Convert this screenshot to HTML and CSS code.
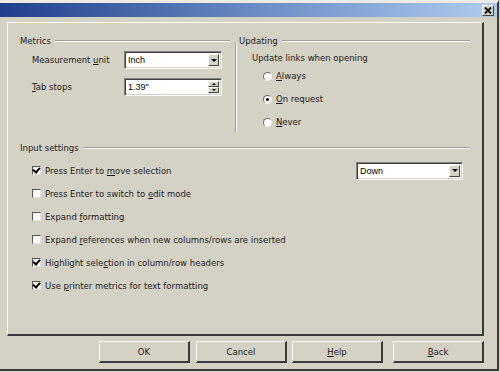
FILE: index.html
```html
<!DOCTYPE html>
<html lang="en">
<head>
    <meta charset="UTF-8">
    <title>Options</title>
    <link rel="stylesheet" href="styles.css">
</head>
<body>

<div class="window">
    <div class="titlebar">
        <span class="close-btn">
            <svg width="8" height="7" viewBox="0 0 8 7"><path d="M1 0.5 L7 6.5 M7 0.5 L1 6.5" stroke="#000" stroke-width="1.8"/></svg>
        </span>
    </div>

    <div class="page">
        <div class="top">
            <div class="col-left">
                <div class="heading"><span>Metrics</span><i class="rule"></i></div>
                <div class="field-row">
                    <label>Measurement <u>u</u>nit</label>
                    <div class="combo">
                        <span class="value">Inch</span>
                        <span class="drop"><i class="tri-down"></i></span>
                    </div>
                </div>
                <div class="field-row">
                    <label><u>T</u>ab stops</label>
                    <div class="combo">
                        <span class="value">1.39"</span>
                        <span class="spin">
                            <span class="spin-btn"><i class="tri-up"></i></span>
                            <span class="spin-btn"><i class="tri-down"></i></span>
                        </span>
                    </div>
                </div>
            </div>

            <div class="separator"></div>

            <div class="col-right">
                <div class="heading"><span>Updating</span><i class="rule"></i></div>
                <div class="sub-label">Update links when opening</div>
                <div class="radio-list">
                    <div class="radio-row"><span class="radio"></span><span><u>A</u>lways</span></div>
                    <div class="radio-row"><span class="radio checked"></span><span><u>O</u>n request</span></div>
                    <div class="radio-row"><span class="radio"></span><span><u>N</u>ever</span></div>
                </div>
            </div>
        </div>

        <div class="heading input-heading"><span>Input settings</span><i class="rule"></i></div>
        <div class="check-list">
            <div class="check-row">
                <span class="check checked"></span>
                <span class="check-text">Press Enter to <u>m</u>ove selection</span>
                <div class="combo combo-down">
                    <span class="value">Down</span>
                    <span class="drop"><i class="tri-down"></i></span>
                </div>
            </div>
            <div class="check-row"><span class="check"></span><span class="check-text">Press Enter to switch to <u>e</u>dit mode</span></div>
            <div class="check-row"><span class="check"></span><span class="check-text">Expand <u>f</u>ormatting</span></div>
            <div class="check-row"><span class="check"></span><span class="check-text">Expand <u>r</u>eferences when new columns/rows are inserted</span></div>
            <div class="check-row"><span class="check checked"></span><span class="check-text">Highlight sele<u>c</u>tion in column/row headers</span></div>
            <div class="check-row"><span class="check checked"></span><span class="check-text">Use <u>p</u>rinter metrics for text formatting</span></div>
        </div>
    </div>

    <div class="buttons">
        <button type="button" class="btn btn-ok">OK</button>
        <button type="button" class="btn btn-cancel">Cancel</button>
        <button type="button" class="btn btn-help"><u>H</u>elp</button>
        <button type="button" class="btn btn-back"><u>B</u>ack</button>
    </div>
</div>

</body>
</html>
```

FILE: styles.css
```css
* {
    margin: 0;
    padding: 0;
    box-sizing: border-box;
}

body {
    font-family: 'DejaVu Sans', sans-serif;
    font-size: 8.5px;
    color: #1c1c1c;
    background-color: #d4d1c5;
    width: 500px;
    height: 372px;
    overflow: hidden;
}

u {
    text-decoration: underline;
    text-underline-offset: 1px;
}

.window {
    width: 499px;
    height: 371px;
    border-right: 2px solid #3a3a3a;
    border-bottom: 2px solid #3a3a3a;
    border-top: 3px solid #ecebe4;
}

/* title bar */
.titlebar {
    height: 14px;
    background: linear-gradient(to right, #1f3f8c, #6f90c8 55%, #aecbee);
    display: flex;
    justify-content: flex-end;
    align-items: center;
    padding-right: 3px;
}

.close-btn {
    width: 12px;
    height: 11px;
    background-color: #d4d1c5;
    border-top: 1px solid #fff;
    border-left: 1px solid #fff;
    border-right: 1px solid #404040;
    border-bottom: 1px solid #404040;
    display: flex;
    justify-content: center;
    align-items: center;
}

/* tab page */
.page {
    margin: 5px 0 0 7px;
    width: 477px;
    height: 314px;
    border-top: 1px solid #fff;
    border-left: 1px solid #fff;
    border-right: 2px solid #3a3a3a;
    border-bottom: 2px solid #3a3a3a;
    padding: 12px 12px 0 12px;
}

.top {
    display: flex;
    height: 98px;
}

.col-left {
    width: 210px;
}

.separator {
    width: 2px;
    margin: 7px 2px 0 5px;
    border-left: 1px solid #a09e96;
    border-right: 1px solid #fff;
    height: 91px;
}

.col-right {
    flex: 1;
}

.heading {
    display: flex;
    align-items: center;
    height: 12px;
}

.rule {
    flex: 1;
    height: 2px;
    margin-left: 4px;
    border-top: 1px solid #a09e96;
    border-bottom: 1px solid #fff;
}

.field-row {
    display: flex;
    align-items: center;
    padding-left: 12px;
    margin-top: 4px;
}

.field-row + .field-row {
    margin-top: 9px;
}

.field-row label {
    width: 92px;
}

/* combo boxes */
.combo {
    width: 98px;
    height: 18px;
    background-color: #fff;
    border-top: 1px solid #808080;
    border-left: 1px solid #808080;
    border-right: 1px solid #fff;
    border-bottom: 1px solid #fff;
    box-shadow: inset 1px 1px 0 #404040, inset -1px -1px 0 #d4d1c5;
    display: flex;
    align-items: stretch;
    padding: 2px 2px 2px 3px;
}

.combo .value {
    flex: 1;
    font-family: 'Liberation Sans', Arial, sans-serif;
    font-size: 9px;
    color: #000;
    display: flex;
    align-items: center;
}

.drop, .spin-btn {
    width: 11px;
    background-color: #d4d1c5;
    border-top: 1px solid #fff;
    border-left: 1px solid #fff;
    border-right: 1px solid #404040;
    border-bottom: 1px solid #404040;
    display: flex;
    justify-content: center;
    align-items: center;
}

.spin {
    display: flex;
    flex-direction: column;
}

.spin-btn {
    flex: 1;
}

.tri-down {
    width: 0;
    height: 0;
    border-left: 3px solid transparent;
    border-right: 3px solid transparent;
    border-top: 3px solid #000;
}

.tri-up {
    width: 0;
    height: 0;
    border-left: 2px solid transparent;
    border-right: 2px solid transparent;
    border-bottom: 2px solid #000;
}

.spin .tri-down {
    border-left-width: 2px;
    border-right-width: 2px;
    border-top-width: 2px;
}

/* radios */
.sub-label {
    margin: 5px 0 0 13px;
    height: 12px;
    display: flex;
    align-items: center;
}

.radio-list {
    display: flex;
    flex-direction: column;
    gap: 11px;
    margin-top: 6px;
    padding-left: 24px;
}

.radio-row {
    display: flex;
    align-items: center;
    height: 12px;
    gap: 4px;
}

.radio {
    width: 9px;
    height: 9px;
    border-radius: 50%;
    background-color: #fff;
    border: 1px solid;
    border-color: #6f6d66 #eeede8 #eeede8 #6f6d66;
    position: relative;
}

.radio.checked::after {
    content: "";
    position: absolute;
    left: 2px;
    top: 2px;
    width: 3px;
    height: 3px;
    border-radius: 50%;
    background-color: #000;
}

/* input settings */
.input-heading {
    margin-top: 9px;
}

.check-list {
    margin-top: 5px;
    padding-left: 12px;
}

.check-row {
    display: flex;
    align-items: center;
    height: 23px;
}

.check {
    width: 9px;
    height: 9px;
    background-color: #fff;
    border-top: 1px solid #555;
    border-left: 1px solid #555;
    border-right: 1px solid #e4e3dc;
    border-bottom: 1px solid #e4e3dc;
    margin-right: 4px;
    position: relative;
}

.check.checked::after {
    content: "";
    position: absolute;
    left: 1px;
    top: -1px;
    width: 3px;
    height: 5px;
    border-right: 2px solid #000;
    border-bottom: 2px solid #000;
    transform: rotate(40deg);
}

.check-text {
    flex: 1;
}

.combo-down {
    width: 107px;
    margin-right: 7px;
}

/* bottom buttons */
.buttons {
    display: flex;
    padding-left: 99px;
    margin-top: 5px;
    gap: 5px;
}

.btn {
    font-family: 'DejaVu Sans', sans-serif;
    font-size: 8.5px;
    color: #1c1c1c;
    height: 22px;
    width: 91px;
    background-color: #d4d1c5;
    border-top: 1px solid #fff;
    border-left: 1px solid #fff;
    border-right: 2px solid #3a3a3a;
    border-bottom: 2px solid #3a3a3a;
}

.btn-ok {
    margin-right: 1px;
}

.btn-back {
    margin-left: 5px;
}
```
